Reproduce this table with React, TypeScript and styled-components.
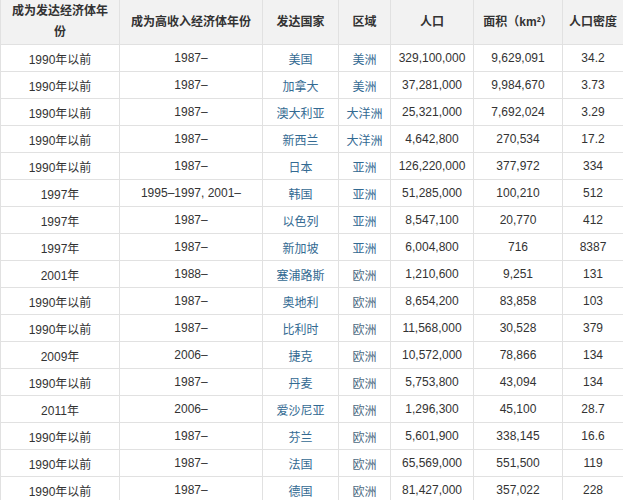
import React from 'react';
import styled, { createGlobalStyle } from 'styled-components';

const GlobalStyle = createGlobalStyle`
  html, body {
    margin: 0;
    padding: 0;
    background: #fff;
  }
  body {
    font-family: "Liberation Sans", "Noto Sans CJK SC", sans-serif;
    color: #333;
  }
`;

const Table = styled.table`
  width: 623px;
  border-collapse: collapse;
  table-layout: fixed;
  font-size: 12px;
`;

const HeadCell = styled.th<{ $wrap?: boolean }>`
  height: 44px;
  padding: 0 6px;
  background: #f2f2f2;
  color: #333;
  font-weight: bold;
  font-size: 12px;
  line-height: 21px;
  text-align: center;
  white-space: ${(p) => (p.$wrap ? 'normal' : 'nowrap')};
  border: 1px solid #e1e1e1;
  border-top: none;
`;

const Cell = styled.td<{ $link?: boolean; $muted?: boolean }>`
  height: 26px;
  padding: 0 4px;
  text-align: center;
  border: 1px solid #e1e1e1;
  color: ${(p) => (p.$link ? (p.$muted ? '#4d6a82' : '#336a92') : '#333')};
  white-space: nowrap;
`;

type Row = [string, string, string, string, string, string, string];

const rows: Row[] = [
  ['1990年以前', '1987–', '美国', '美洲', '329,100,000', '9,629,091', '34.2'],
  ['1990年以前', '1987–', '加拿大', '美洲', '37,281,000', '9,984,670', '3.73'],
  ['1990年以前', '1987–', '澳大利亚', '大洋洲', '25,321,000', '7,692,024', '3.29'],
  ['1990年以前', '1987–', '新西兰', '大洋洲', '4,642,800', '270,534', '17.2'],
  ['1990年以前', '1987–', '日本', '亚洲', '126,220,000', '377,972', '334'],
  ['1997年', '1995–1997, 2001–', '韩国', '亚洲', '51,285,000', '100,210', '512'],
  ['1997年', '1987–', '以色列', '亚洲', '8,547,100', '20,770', '412'],
  ['1997年', '1987–', '新加坡', '亚洲', '6,004,800', '716', '8387'],
  ['2001年', '1988–', '塞浦路斯', '欧洲', '1,210,600', '9,251', '131'],
  ['1990年以前', '1987–', '奥地利', '欧洲', '8,654,200', '83,858', '103'],
  ['1990年以前', '1987–', '比利时', '欧洲', '11,568,000', '30,528', '379'],
  ['2009年', '2006–', '捷克', '欧洲', '10,572,000', '78,866', '134'],
  ['1990年以前', '1987–', '丹麦', '欧洲', '5,753,800', '43,094', '134'],
  ['2011年', '2006–', '爱沙尼亚', '欧洲', '1,296,300', '45,100', '28.7'],
  ['1990年以前', '1987–', '芬兰', '欧洲', '5,601,900', '338,145', '16.6'],
  ['1990年以前', '1987–', '法国', '欧洲', '65,569,000', '551,500', '119'],
  ['1990年以前', '1987–', '德国', '欧洲', '81,427,000', '357,022', '228'],
];

const widths = [119, 143, 76, 52, 83, 89, 61];

const App: React.FC = () => (
  <>
    <GlobalStyle />
    <Table>
      <colgroup>
        {widths.map((w, i) => (
          <col key={i} style={{ width: w }} />
        ))}
      </colgroup>
      <thead>
        <tr>
          <HeadCell $wrap>成为发达经济体年份</HeadCell>
          <HeadCell>成为高收入经济体年份</HeadCell>
          <HeadCell>发达国家</HeadCell>
          <HeadCell>区域</HeadCell>
          <HeadCell>人口</HeadCell>
          <HeadCell>面积（km²）</HeadCell>
          <HeadCell>人口密度</HeadCell>
        </tr>
      </thead>
      <tbody>
        {rows.map((r, i) => (
          <tr key={i}>
            <Cell>{r[0]}</Cell>
            <Cell>{r[1]}</Cell>
            <Cell $link>{r[2]}</Cell>
            <Cell $link $muted={r[3] === '欧洲'}>{r[3]}</Cell>
            <Cell>{r[4]}</Cell>
            <Cell>{r[5]}</Cell>
            <Cell>{r[6]}</Cell>
          </tr>
        ))}
      </tbody>
    </Table>
  </>
);

export default App;
